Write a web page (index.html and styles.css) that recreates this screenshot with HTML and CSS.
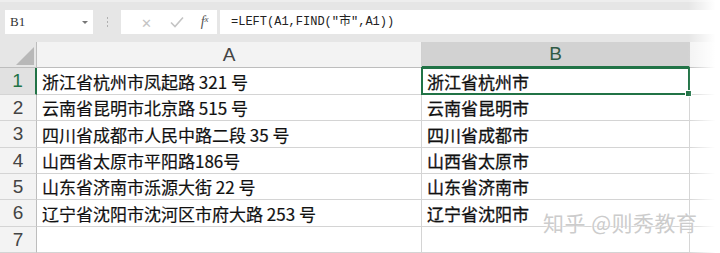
FILE: index.html
```html
<!DOCTYPE html>
<html lang="zh-CN">
<head>
    <meta charset="UTF-8">
    <meta name="viewport" content="width=device-width, initial-scale=1.0">
    <title>LEFT FIND</title>
    <link rel="stylesheet" href="styles.css">
</head>
<body>
    <div class="window">
        <!-- Formula bar -->
        <div class="toolbar">
            <div class="name-box">
                <span>B1</span>
                <span class="drop"></span>
            </div>
            <div class="dots"><i></i><i></i><i></i></div>
            <div class="fn-box">
                <span class="fn-btn">&#x2715;</span>
                <span class="fn-btn">
                    <svg width="14" height="12" viewBox="0 0 14 12"><path d="M1 6.5 L5 10.5 L13 1.5" fill="none" stroke="#c4c4c4" stroke-width="1.6"/></svg>
                </span>
                <span class="fn-btn fx">f<sub>x</sub></span>
            </div>
            <div class="formula">=LEFT(A1,FIND("市",A1))</div>
        </div>

        <!-- Sheet grid -->
        <div class="sheet">
            <div class="corner"><span class="tri"></span></div>
            <div class="col-head">A</div>
            <div class="col-head active">B</div>
            <div class="col-head rest"></div>

            <div class="row-head active">1</div>
            <div class="cell">浙江省杭州市凤起路 321 号</div>
            <div class="cell res selected">浙江省杭州市</div>
            <div class="cell rest"></div>

            <div class="row-head">2</div>
            <div class="cell">云南省昆明市北京路 515 号</div>
            <div class="cell res">云南省昆明市</div>
            <div class="cell rest"></div>

            <div class="row-head">3</div>
            <div class="cell">四川省成都市人民中路二段 35 号</div>
            <div class="cell res">四川省成都市</div>
            <div class="cell rest"></div>

            <div class="row-head">4</div>
            <div class="cell">山西省太原市平阳路186号</div>
            <div class="cell res">山西省太原市</div>
            <div class="cell rest"></div>

            <div class="row-head">5</div>
            <div class="cell">山东省济南市泺源大街 22 号</div>
            <div class="cell res">山东省济南市</div>
            <div class="cell rest"></div>

            <div class="row-head">6</div>
            <div class="cell">辽宁省沈阳市沈河区市府大路 253 号</div>
            <div class="cell res">辽宁省沈阳市</div>
            <div class="cell rest"></div>

            <div class="row-head">7</div>
            <div class="cell"></div>
            <div class="cell"></div>
            <div class="cell rest"></div>
        </div>

        <!-- right edge fade and watermark -->
        <div class="fade"></div>
        <div class="watermark">知乎 @则秀教育</div>
    </div>
</body>
</html>
```

FILE: styles.css
```css
/* Page basics */
body {
    margin: 0;
    background: #fff;
    font-family: "Noto Sans CJK SC", sans-serif;
    overflow: hidden;
}

.window {
    position: relative;
    width: 720px;
    height: 253px;
    overflow: hidden;
}

/* Formula bar row */
.toolbar {
    height: 42px;
    background: #e6e6e6;
    border-top: 2px solid #eeeeee;
    box-sizing: border-box;
    display: flex;
    align-items: flex-start;
    padding: 8px 0 0 5px;
}

.name-box {
    width: 88px;
    height: 24px;
    background: #fff;
    box-sizing: border-box;
    display: flex;
    align-items: center;
    justify-content: space-between;
    padding: 0 5px 0 5px;
    font-family: "Liberation Serif", "Noto Sans CJK SC", serif;
    font-size: 13px;
    color: #333;
}

.drop {
    width: 0;
    height: 0;
    border-left: 3px solid transparent;
    border-right: 3px solid transparent;
    border-top: 3px solid #777;
}

.dots {
    width: 28px;
    height: 24px;
    display: flex;
    flex-direction: column;
    align-items: center;
    justify-content: center;
    gap: 2px;
}

.dots i {
    width: 1px;
    height: 2px;
    background: #b0b0b0;
}

.fn-box {
    width: 96px;
    height: 24px;
    background: #fff;
    display: flex;
    align-items: center;
    padding-left: 10px;
    box-sizing: border-box;
}

.fn-btn {
    width: 32px;
    display: flex;
    justify-content: center;
    color: #c4c4c4;
    font-size: 13px;
}

.fx {
    color: #555;
    font-family: "Liberation Serif", serif;
    font-style: italic;
    font-size: 14px;
    width: 26px;
}

.fx sub {
    font-size: 9px;
    vertical-align: -1px;
}

.formula {
    flex: 1;
    height: 24px;
    margin-left: 3px;
    background: #fff;
    box-sizing: border-box;
    padding-left: 11px;
    line-height: 24px;
    font-family: "Liberation Mono", "Noto Sans CJK SC", monospace;
    font-size: 12px;
    color: #222;
}

/* Sheet grid */
.sheet {
    display: grid;
    grid-template-columns: 37px 385px 268px 1fr;
    grid-template-rows: 26px 27px 26px 27px 26px 26px 27px 26px;
}

.corner, .col-head, .row-head, .cell {
    border-right: 1px solid #d4d4d4;
    border-bottom: 1px solid #d4d4d4;
    box-sizing: border-box;
}

.corner {
    background: #e6e6e6;
    border-right-color: #bdbdbd;
    border-bottom-color: #bdbdbd;
    display: flex;
    align-items: flex-end;
    justify-content: flex-end;
    padding: 0 2px 2px 0;
}

.tri {
    width: 0;
    height: 0;
    border-left: 18px solid transparent;
    border-bottom: 18px solid #b8b8b8;
}

.col-head {
    background: #f3f3f3;
    border-bottom-color: #bdbdbd;
    border-right-color: #d0d0d0;
    display: flex;
    justify-content: center;
    align-items: flex-end;
    font-family: "Liberation Sans", sans-serif;
    font-size: 19px;
    line-height: 24px;
    color: #444;
}

.col-head.active {
    background: #d2d2d2;
    border-bottom: 2px solid #217346;
    color: #2f5a44;
}

.row-head {
    background: #f3f3f3;
    border-right-color: #bdbdbd;
    display: flex;
    justify-content: center;
    align-items: center;
    font-family: "Liberation Sans", sans-serif;
    font-size: 19px;
    color: #444;
}

.row-head.active {
    background: #e1e1e1;
    border-right: 2px solid #217346;
    color: #217346;
}

.col-head.rest, .cell.rest {
    border-right: none;
}

.cell {
    display: flex;
    align-items: flex-end;
    padding: 0 0 2px 5px;
    font-size: 17px;
    line-height: 20px;
    color: #111;
    white-space: nowrap;
    -webkit-text-stroke: 0.2px #111;
}

/* result column looks a little heavier */
.cell.res {
    -webkit-text-stroke: 0.3px #111;
}

.cell.selected {
    position: relative;
    border: 2px solid #217346;
    margin: -1px 0 0 -1px;
    padding-left: 4px;
    padding-bottom: 1px;
}

/* fill handle of the active cell */
.cell.selected::after {
    content: "";
    position: absolute;
    right: -4px;
    bottom: -4px;
    width: 5px;
    height: 5px;
    background: #217346;
    border: 1px solid #fff;
}

.fade {
    position: absolute;
    top: 0;
    right: 0;
    width: 32px;
    height: 100%;
    background: linear-gradient(to right, rgba(255, 255, 255, 0), #fff 85%);
}

.watermark {
    position: absolute;
    left: 543px;
    top: 207px;
    font-size: 21px;
    color: #cccccc;
    letter-spacing: 0.5px;
    text-shadow: 0 0 2px #fff, 0 0 2px #fff;
}
```
